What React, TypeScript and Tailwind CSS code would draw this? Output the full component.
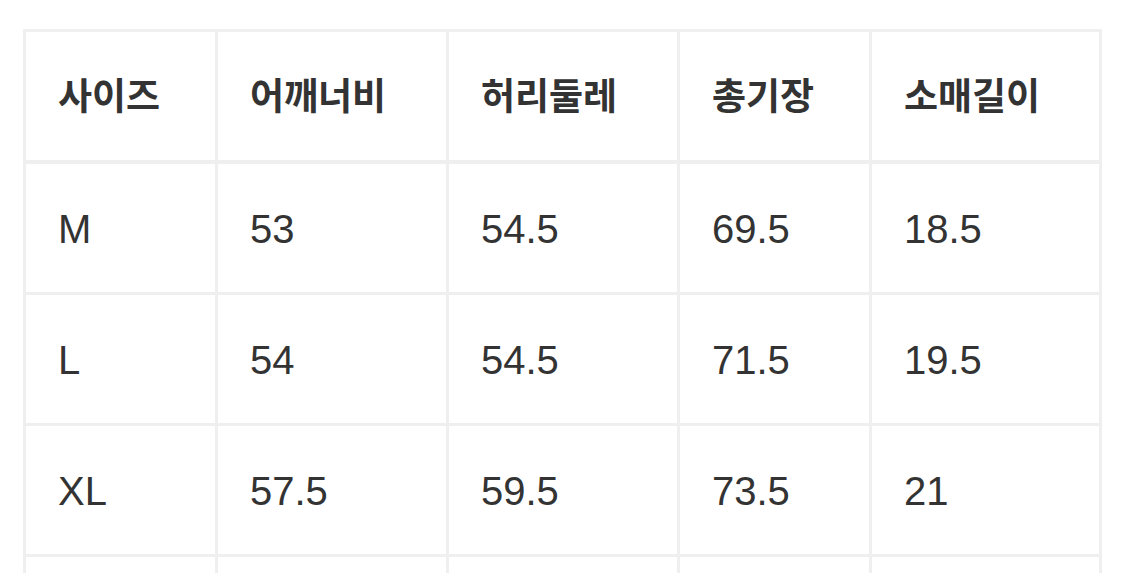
const headers = ["사이즈", "어깨너비", "허리둘레", "총기장", "소매길이"];

const rows = [
  ["M", "53", "54.5", "69.5", "18.5"],
  ["L", "54", "54.5", "71.5", "19.5"],
  ["XL", "57.5", "59.5", "73.5", "21"],
  ["", "", "", "", ""],
];

const cols = "grid grid-cols-[189px_228px_228px_189px_227px] gap-[3px]";

export default function App() {
  return (
    <div className="min-h-screen bg-white pl-[23px] pt-[29px] font-['Liberation_Sans','Noto_Sans_CJK_KR',sans-serif] text-[#333]">
      <div className="inline-flex flex-col gap-[3px] bg-[#efefef] p-[3px]">
        <div className={`${cols} mb-[1px]`}>
          {headers.map((h) => (
            <div
              key={h}
              className="flex h-[128px] items-center bg-white pb-[2px] pl-8 font-['Noto_Sans_CJK_KR',sans-serif] text-[37px] font-bold"
            >
              {h}
            </div>
          ))}
        </div>
        {rows.map((r, i) => (
          <div key={i} className={cols}>
            {r.map((c, j) => (
              <div
                key={j}
                className="flex h-[128px] items-center bg-white pl-8 pt-[2px] text-[40px]"
              >
                {c}
              </div>
            ))}
          </div>
        ))}
      </div>
    </div>
  );
}
